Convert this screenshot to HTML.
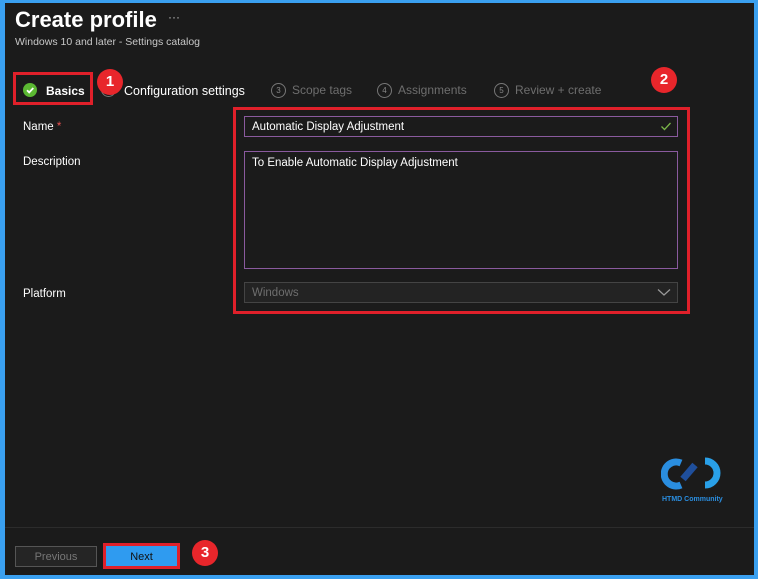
<!DOCTYPE html>
<html><head><style>
*{margin:0;padding:0;box-sizing:border-box}
body{width:758px;height:579px;background:#3aa0f0;font-family:"Liberation Sans",sans-serif;overflow:hidden;position:relative}
.frame{position:absolute;left:5px;top:3px;width:749px;height:572px;background:#1b1b1b}
.a{position:absolute}
.t{color:#fff;font-size:12px}
.g{color:#6e6e6e;font-size:12px}
.badge{position:absolute;width:26px;height:26px;border-radius:50%;background:#e8262b;color:#fff;font-weight:bold;font-size:15px;text-align:center;line-height:26px}
.num{display:inline-block;width:15px;height:15px;border:1px solid #777;border-radius:50%;font-size:8px;text-align:center;line-height:13px;color:#888;vertical-align:middle;margin-right:6px}
.inp{position:absolute;left:244px;width:434px;border:1px solid #8a5a9e;background:#1b1b1b;color:#fff;font-size:11.5px;padding-left:7px}
</style></head><body>
<div class="frame"></div>
<div class="a" style="left:15px;top:7px;color:#fff;font-size:22px;font-weight:bold">Create profile</div>
<div class="a" style="left:168px;top:10px;color:#bbb;font-size:12px">···</div>
<div class="a" style="left:15px;top:36px;color:#c8c8c8;font-size:10.5px">Windows 10 and later - Settings catalog</div>

<div class="a" style="left:13px;top:72px;width:80px;height:33px;border:3px solid #e0202a"></div>
<div class="a" style="left:23px;top:83px;width:14px;height:14px;border-radius:50%;background:#5bb832"></div>
<svg class="a" style="left:23px;top:83px" width="14" height="14"><path d="M4 7.2l2.2 2.2L10.3 5" stroke="#fff" stroke-width="1.8" fill="none"/></svg>
<div class="a t" style="left:46px;top:84px;font-weight:bold">Basics</div>
<div class="a" style="left:101px;top:82px;width:15px;height:15px;border:1px solid #777;border-radius:50%"></div>
<div class="badge" style="left:97px;top:69px">1</div>
<div class="a t" style="left:124px;top:84px;font-size:12.5px">Configuration settings</div>
<div class="a g" style="left:271px;top:83px"><span class="num">3</span>Scope tags</div>
<div class="a g" style="left:377px;top:83px"><span class="num">4</span>Assignments</div>
<div class="a g" style="left:494px;top:83px"><span class="num">5</span>Review + create</div>
<div class="badge" style="left:651px;top:67px">2</div>

<div class="a t" style="left:23px;top:121px;font-size:11.5px">Name <span style="color:#e85050">*</span></div>
<div class="a t" style="left:23px;top:156px;font-size:11.5px">Description</div>
<div class="a t" style="left:23px;top:288px;font-size:11.5px">Platform</div>

<div class="a" style="left:233px;top:107px;width:457px;height:207px;border:3px solid #e0202a"></div>
<div class="inp" style="top:116px;height:21px;line-height:20px">Automatic Display Adjustment</div>
<svg class="a" style="left:660px;top:120px" width="12" height="12"><path d="M1.5 6.5l3 3L10.5 3" stroke="#7ab648" stroke-width="1.3" fill="none"/></svg>
<div class="inp" style="top:151px;height:118px;padding-top:5px">To Enable Automatic Display Adjustment</div>
<div class="inp" style="top:282px;height:21px;line-height:21px;border-color:#444;background:#232323;color:#6e6e6e">Windows</div>
<svg class="a" style="left:657px;top:288px" width="14" height="9"><path d="M1 1.5l6 5.5 6-5.5" stroke="#999" stroke-width="1.2" fill="none"/></svg>

<svg class="a" style="left:661px;top:455px" width="66" height="36"><path d="M20 8a12 12 0 1 0 0 22" stroke="#2a8ee0" stroke-width="7" fill="none"/><path d="M22 24l12-14" stroke="#1f4f9c" stroke-width="7"/><path d="M44 6a12 12 0 1 1 0 24" stroke="#29a0e8" stroke-width="7" fill="none"/></svg>
<div class="a" style="left:662px;top:496px;color:#2a8ee0;font-size:7px;font-weight:bold">HTMD Community</div>

<div class="a" style="left:5px;top:527px;width:749px;height:1px;background:#2c2c2c"></div>
<div class="a" style="left:15px;top:546px;width:82px;height:21px;border:1px solid #555;background:#252525;color:#777;font-size:11px;text-align:center;line-height:21px">Previous</div>
<div class="a" style="left:103px;top:543px;width:77px;height:26px;border:3px solid #e0202a;background:#2f9bf0;color:#111;font-size:11px;text-align:center;line-height:22px">Next</div>
<div class="badge" style="left:192px;top:540px">3</div>
</body></html>
